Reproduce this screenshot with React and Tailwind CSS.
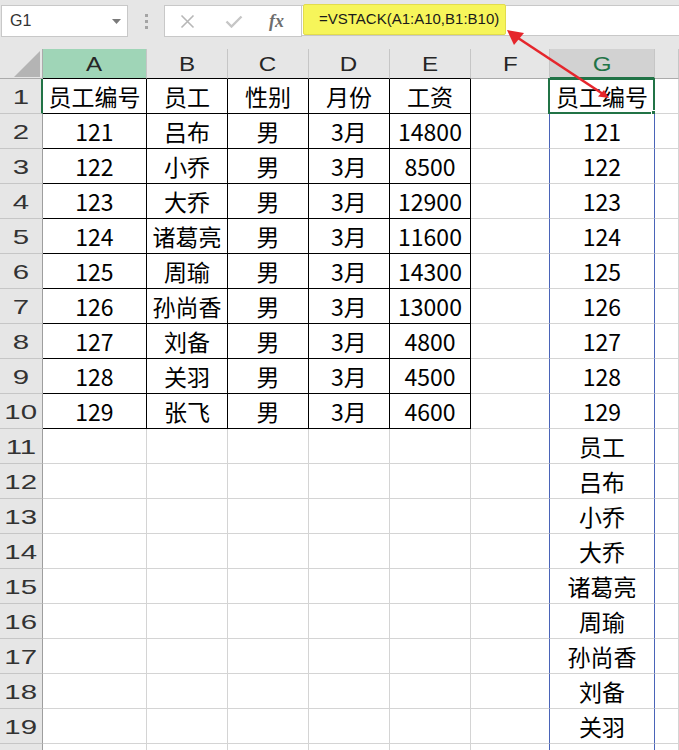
import React from "react";

const data = [
    ["员工编号", "员工", "性别", "月份", "工资"],
    ["121", "吕布", "男", "3月", "14800"],
    ["122", "小乔", "男", "3月", "8500"],
    ["123", "大乔", "男", "3月", "12900"],
    ["124", "诸葛亮", "男", "3月", "11600"],
    ["125", "周瑜", "男", "3月", "14300"],
    ["126", "孙尚香", "男", "3月", "13000"],
    ["127", "刘备", "男", "3月", "4800"],
    ["128", "关羽", "男", "3月", "4500"],
    ["129", "张飞", "男", "3月", "4600"],
];

// VSTACK(A1:A10,B1:B10)
const stacked = data.map((r) => r[0]).concat(data.map((r) => r[1]));

const letters = ["A", "B", "C", "D", "E", "F", "G", ""];
const cellFont = { fontFamily: '"Noto Sans CJK SC", "Noto Sans", sans-serif' };
const hdrFont = { fontFamily: '"Liberation Sans", Arial, sans-serif' };

function colHeaderClass(i) {
    if (i === 0) return "bg-[#9fd5b7] border-r border-[#c6c6c6] border-b border-b-black text-[#262626]";
    if (i < 5) return "bg-[#e6e6e6] border-r border-[#c6c6c6] border-b border-b-black text-[#262626]";
    if (i === 6) return "bg-[#d2d2d2] border-r border-[#c6c6c6] border-b-2 border-b-[#217346] text-[#217346]";
    return "bg-[#e6e6e6] border-r border-[#c6c6c6] border-b border-b-[#ababab] text-[#262626]";
}

function cellClass(row, col) {
    // row is 1-based, col 0..7
    if (row <= 10 && col < 5) return "border-r border-b border-black";
    if ((col === 5 || col === 6) && row <= 20) return "border-r border-b border-r-[#4a64b8] border-b-[#d4d4d4]";
    return "border-r border-b border-[#d4d4d4]";
}

function cellText(row, col) {
    if (row <= 10 && col < 5) return data[row - 1][col];
    if (col === 6 && row <= 20) return stacked[row - 1];
    return "";
}

function TopBar() {
    return (
        <div className="h-[49px] bg-[#e6e6e6] flex items-start pt-[5px]">
            <div className="ml-[1px] w-[127px] h-[32px] bg-white border border-[#c8c8c8] flex items-center justify-between pl-[8px] pr-[6px]">
                <span className="text-[16px] text-[#333]" style={hdrFont}>G1</span>
                <svg width="9" height="5" viewBox="0 0 9 5"><path d="M0 0h9L4.5 5z" fill="#7a7a7a" /></svg>
            </div>
            <div className="ml-[17px] mt-[9px] flex flex-col gap-[3px]">
                <span className="w-[3px] h-[3px] bg-[#a4a4a4]" />
                <span className="w-[3px] h-[3px] bg-[#a4a4a4]" />
                <span className="w-[3px] h-[3px] bg-[#a4a4a4]" />
            </div>
            <div className="ml-[16px] w-[138px] h-[32px] bg-white border border-[#c8c8c8] flex items-center">
                <svg className="ml-[15px]" width="15" height="15" viewBox="0 0 15 15">
                    <path d="M1.5 1.5l12 12M13.5 1.5l-12 12" stroke="#b7b7b7" strokeWidth="1.6" />
                </svg>
                <svg className="ml-[30px]" width="18" height="13" viewBox="0 0 18 13">
                    <path d="M1.5 6.5l5 5L16.5 1.5" stroke="#c6c6c6" strokeWidth="2.4" fill="none" />
                </svg>
                <span
                    className="ml-[26px] text-[18px] italic font-bold text-[#6e6e6e] leading-none"
                    style={{ fontFamily: '"Liberation Serif", "Times New Roman", serif' }}>
                    fx
                </span>
            </div>
            <div className="flex-1 h-[31px] bg-white border-y border-[#c8c8c8] relative">
                <div className="absolute left-[1px] top-[-2px] w-[203px] h-[31px] bg-[#f6f55a] border border-[#e2dc4c] rounded-[2px] flex items-center pl-[15px]">
                    <span className="text-[15px] text-[#1a1a1a]" style={hdrFont}>
                        =VSTACK(A1:A10,B1:B10)
                    </span>
                </div>
            </div>
        </div>
    );
}

function HeaderRow() {
    return (
        <div className="grid grid-cols-[43px_104px_81px_81px_81px_81px_79px_105px_1fr] grid-rows-[30px] h-[30px]">
            <div className="bg-[#e6e6e6] border-r border-b border-[#ababab] flex items-end justify-end pr-[2px] pb-[1px] overflow-hidden">
                <svg width="26" height="26" viewBox="0 0 26 26"><path d="M26 0V26H0z" fill="#b4b4b4" /></svg>
            </div>
            {letters.map((l, i) => (
                <div
                    key={i}
                    className={"flex items-center justify-center text-[21px] leading-none overflow-hidden " + colHeaderClass(i)}
                    style={hdrFont}>
                    <span className="inline-block scale-x-[1.15]">{l}</span>
                </div>
            ))}
        </div>
    );
}

function Row({ n }) {
    return (
        <div className="grid grid-cols-[43px_104px_81px_81px_81px_81px_79px_105px_1fr] grid-rows-[35px] h-[35px]">
            <div
                className={
                    "bg-[#e6e6e6] border-b border-b-[#c6c6c6] border-r flex items-center justify-center text-[21px] leading-none text-[#333] " +
                    (n === 1 ? "border-r-2 border-r-[#217346]" : "border-r-[#9e9e9e]")
                }
                style={hdrFont}>
                <span className="inline-block scale-x-[1.4]">{n}</span>
            </div>
            {letters.map((l, c) => (
                <div
                    key={c}
                    className={"relative bg-white flex items-center justify-center text-[23px] leading-none text-black " + cellClass(n, c)}
                    style={cellFont}>
                    {cellText(n, c)}
                    {n === 1 && c === 6 && (
                        <>
                            <div className="absolute left-[-2px] top-[-1px] right-[-1px] bottom-[-1px] border-2 border-[#217346]" />
                            <div className="absolute right-[-4px] bottom-[-4px] w-[7px] h-[7px] bg-[#217346] border border-white" />
                        </>
                    )}
                </div>
            ))}
        </div>
    );
}

function Arrow() {
    return (
        <svg className="absolute left-0 top-0 pointer-events-none" width="679" height="750" viewBox="0 0 679 750">
            <line x1="515" y1="36" x2="606" y2="96" stroke="#e5262c" strokeWidth="2.6" />
            <path d="M507 30L524 33L514 45z" fill="#e5262c" />
            <path d="M609 98L598 96.5L604 90z" fill="#e5262c" />
        </svg>
    );
}

export default function App() {
    const rows = Array.from({ length: 20 }, (_, i) => i + 1);
    return (
        <div className="relative w-[679px] h-[750px] overflow-hidden bg-white">
            <TopBar />
            <HeaderRow />
            {rows.map((n) => (
                <Row key={n} n={n} />
            ))}
            <Arrow />
        </div>
    );
}
